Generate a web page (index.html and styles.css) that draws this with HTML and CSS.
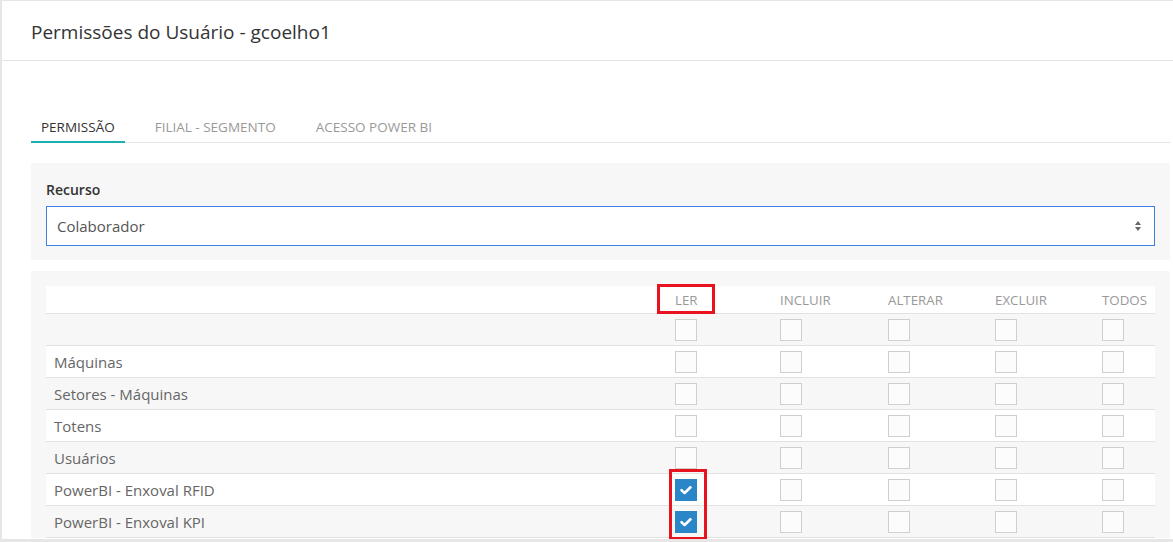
FILE: index.html
```html
<!DOCTYPE html>
<html lang="pt">
<head>
<meta charset="utf-8">
<title>Permissões do Usuário</title>
<link rel="stylesheet" href="styles.css">
</head>
<body>
<div class="modal">
  <div class="modal-header">
    <h4 class="modal-title">Permissões do Usuário - gcoelho1</h4>
  </div>
  <div class="modal-body">
    <ul class="tabs">
      <li class="tab active">PERMISSÃO</li>
      <li class="tab">FILIAL - SEGMENTO</li>
      <li class="tab">ACESSO POWER BI</li>
    </ul>

    <div class="well well-form">
      <label class="label">Recurso</label>
      <div class="select">
        <span>Colaborador</span>
        <svg class="arrows" width="8" height="12" viewBox="0 0 8 12"><path d="M4 1 L7 5 L1 5 Z M1 7 L7 7 L4 11 Z" fill="#666"/></svg>
      </div>
    </div>

    <div class="well well-table">
      <div class="grid">
        <div class="row head">
          <div class="cell"></div>
          <div class="cell mark-cell">LER<span class="mark mark-head"></span></div>
          <div class="cell">INCLUIR</div>
          <div class="cell">ALTERAR</div>
          <div class="cell">EXCLUIR</div>
          <div class="cell">TODOS</div>
        </div>
        <div class="row stripe">
          <div class="cell"></div>
          <div class="cell"><span class="cb"></span></div>
          <div class="cell"><span class="cb"></span></div>
          <div class="cell"><span class="cb"></span></div>
          <div class="cell"><span class="cb"></span></div>
          <div class="cell"><span class="cb"></span></div>
        </div>
        <div class="row">
          <div class="cell name">Máquinas</div>
          <div class="cell"><span class="cb"></span></div>
          <div class="cell"><span class="cb"></span></div>
          <div class="cell"><span class="cb"></span></div>
          <div class="cell"><span class="cb"></span></div>
          <div class="cell"><span class="cb"></span></div>
        </div>
        <div class="row stripe">
          <div class="cell name">Setores - Máquinas</div>
          <div class="cell"><span class="cb"></span></div>
          <div class="cell"><span class="cb"></span></div>
          <div class="cell"><span class="cb"></span></div>
          <div class="cell"><span class="cb"></span></div>
          <div class="cell"><span class="cb"></span></div>
        </div>
        <div class="row">
          <div class="cell name">Totens</div>
          <div class="cell"><span class="cb"></span></div>
          <div class="cell"><span class="cb"></span></div>
          <div class="cell"><span class="cb"></span></div>
          <div class="cell"><span class="cb"></span></div>
          <div class="cell"><span class="cb"></span></div>
        </div>
        <div class="row stripe">
          <div class="cell name">Usuários</div>
          <div class="cell"><span class="cb"></span></div>
          <div class="cell"><span class="cb"></span></div>
          <div class="cell"><span class="cb"></span></div>
          <div class="cell"><span class="cb"></span></div>
          <div class="cell"><span class="cb"></span></div>
        </div>
        <div class="row">
          <div class="cell name">PowerBI - Enxoval RFID</div>
          <div class="cell mark-cell"><span class="cb checked"><svg width="22" height="22" viewBox="0 0 22 22"><path d="M6.5 11.2 L9.6 14 L15.5 8.3" fill="none" stroke="#fff" stroke-width="2.6" stroke-linecap="round" stroke-linejoin="round"/></svg></span><span class="mark mark-cb"></span></div>
          <div class="cell"><span class="cb"></span></div>
          <div class="cell"><span class="cb"></span></div>
          <div class="cell"><span class="cb"></span></div>
          <div class="cell"><span class="cb"></span></div>
        </div>
        <div class="row stripe">
          <div class="cell name">PowerBI - Enxoval KPI</div>
          <div class="cell"><span class="cb checked"><svg width="22" height="22" viewBox="0 0 22 22"><path d="M6.5 11.2 L9.6 14 L15.5 8.3" fill="none" stroke="#fff" stroke-width="2.6" stroke-linecap="round" stroke-linejoin="round"/></svg></span></div>
          <div class="cell"><span class="cb"></span></div>
          <div class="cell"><span class="cb"></span></div>
          <div class="cell"><span class="cb"></span></div>
          <div class="cell"><span class="cb"></span></div>
        </div>
      </div>
    </div>
  </div>
</div>
</body>
</html>
```
FILE: styles.css
```css
* { box-sizing: border-box; }
html, body { margin: 0; padding: 0; }
body {
  background: #e6e6e6;
  padding: 1px 0 0 2px;
  height: 542px;
  overflow: hidden;
  font-family: "Open Sans", "Noto Sans", sans-serif;
  color: #333;
}
.modal {
  background: #fff;
  height: 538px;
  overflow: hidden;
}
.modal-header {
  height: 60px;
  border-bottom: 1px solid #e5e5e5;
  padding: 0 29px;
  display: flex;
  align-items: center;
}
.modal-title {
  margin: 0;
  font-size: 19px;
  font-weight: 400;
  color: #333;
  padding-top: 2px;
}
.modal-body {
  padding: 0 3px 0 29px;
}
.tabs {
  list-style: none;
  margin: 49px 0 0 0;
  padding: 0;
  display: flex;
  border-bottom: 1px solid #e3e3e3;
}
.tab {
  font-size: 13.5px;
  line-height: 20px;
  padding: 7px 10px 4px;
  margin-right: 20px;
  margin-bottom: -1px;
  color: #999;
  border-bottom: 2px solid transparent;
}
.tab.active {
  color: #333;
  border-bottom-color: #1ab0b0;
}
.well {
  background: #f7f7f7;
  margin-top: 20px;
  padding: 15px 15px;
}
.well-form { padding-bottom: 14px; }
.label {
  display: block;
  font-size: 14px;
  font-weight: 600;
  line-height: 20px;
  margin: 2px 0 6px;
  color: #333;
}
.select {
  height: 40px;
  border: 1px solid #3c7fdf;
  background: #fff;
  display: flex;
  align-items: center;
  justify-content: space-between;
  padding: 0 10px;
  font-size: 15px;
  color: #555;
}
.arrows { margin-right: 2px; }
.well-table {
  margin-top: 11px;
  padding-bottom: 0;
}
.grid { display: flex; flex-direction: column; }
.row {
  display: grid;
  grid-template-columns: 1fr 105px 108px 107px 107px 61px;
  height: 32px;
  border-bottom: 1px solid #e2e2e2;
  background: #fff;
  align-items: center;
}
.row.head {
  height: 28px;
  font-size: 13.3px;
  color: #999;
}
.row.stripe { background: #f7f7f7; }
.cell {
  padding-left: 8px;
  display: flex;
  align-items: center;
  height: 100%;
}
.name {
  font-size: 15px;
  color: #666;
}
.cb {
  display: block;
  width: 22px;
  height: 22px;
  border: 1px solid #d0cfca;
  background: #fcfcfc;
}
.cb.checked {
  border: none;
  background: #2a86c6;
}
.cb svg { display: block; }
.mark-cell { position: relative; }
.mark {
  position: absolute;
  border: 3px solid #e8131e;
  pointer-events: none;
}
.mark-head {
  left: -10px;
  top: -2px;
  width: 58px;
  height: 30px;
}
.mark-cb {
  left: 2px;
  top: -5px;
  width: 38px;
  height: 71px;
}
```
